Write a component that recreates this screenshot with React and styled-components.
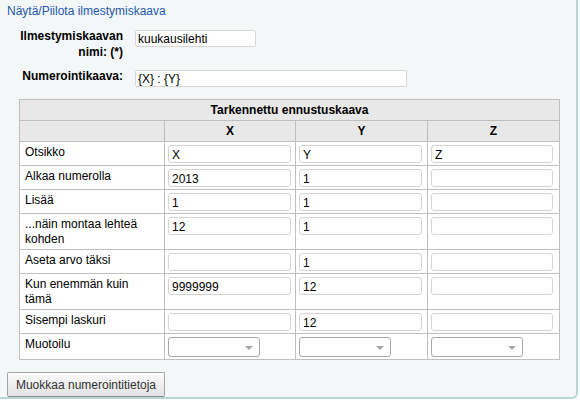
import React from 'react';
import styled, { createGlobalStyle } from 'styled-components';

const GlobalStyle = createGlobalStyle`
  body {
    margin: 0;
    background: #fff;
    font-family: "Liberation Sans", Arial, sans-serif;
    font-size: 12px;
    color: #000;
  }
`;

const rows = [
  { label: 'Otsikko', values: ['X', 'Y', 'Z'] },
  { label: 'Alkaa numerolla', values: ['2013', '1', ''] },
  { label: 'Lisää', values: ['1', '1', ''] },
  { label: '...näin montaa lehteä kohden', values: ['12', '1', ''] },
  { label: 'Aseta arvo täksi', values: ['', '1', ''] },
  { label: 'Kun enemmän kuin tämä', values: ['9999999', '12', ''] },
  { label: 'Sisempi laskuri', values: ['', '12', ''] },
];

const App = () => {
  return (
    <>
      <GlobalStyle />
      <Panel>
        <ToggleLink href="#">Näytä/Piilota ilmestymiskaava</ToggleLink>
        <FieldRow>
          <FieldLabel>Ilmestymiskaavan nimi: (*)</FieldLabel>
          <TextInput width={121} defaultValue="kuukausilehti" />
        </FieldRow>
        <FieldRow>
          <FieldLabel>Numerointikaava:</FieldLabel>
          <TextInput width={272} defaultValue="{X} : {Y}" />
        </FieldRow>
        <PatternTable>
          <colgroup>
            <col style={{ width: 145 }} />
            <col style={{ width: 131 }} />
            <col style={{ width: 132 }} />
            <col style={{ width: 132 }} />
          </colgroup>
          <thead>
            <tr>
              <HeadCell colSpan={4}>Tarkennettu ennustuskaava</HeadCell>
            </tr>
            <tr>
              <HeadCell />
              <HeadCell>X</HeadCell>
              <HeadCell>Y</HeadCell>
              <HeadCell>Z</HeadCell>
            </tr>
          </thead>
          <tbody>
            {rows.map((row) => (
              <tr key={row.label}>
                <LabelCell>{row.label}</LabelCell>
                {row.values.map((v, i) => (
                  <InputCell key={i}>
                    <CellInput defaultValue={v} narrow={i === 2} />
                  </InputCell>
                ))}
              </tr>
            ))}
            <tr>
              <LabelCell>Muotoilu</LabelCell>
              {[0, 1, 2].map((i) => (
                <InputCell key={i}>
                  <SelectWrap>
                    <Select defaultValue="">
                      <option value=""></option>
                    </Select>
                  </SelectWrap>
                </InputCell>
              ))}
            </tr>
          </tbody>
        </PatternTable>
        <EditButton>Muokkaa numerointitietoja</EditButton>
      </Panel>
      <Footer>
        <FooterBox width={73} />
        <FooterBox width={201} />
        <FooterGap width={146} />
        <FooterBox width={87} />
      </Footer>
    </>
  );
};

export default App;

const Panel = styled.div`
  width: 564px;
  padding: 4px 5px 0 7px;
  background: #f3f7f7;
  border-right: 2px solid #b7d7d8;
  border-bottom: 2px solid #b7d7d8;
  border-bottom-right-radius: 6px;
  display: flex;
  flex-direction: column;
  align-items: flex-start;
`;

const ToggleLink = styled.a`
  color: #2658ad;
  text-decoration: none;
  line-height: 14px;
  margin-bottom: 10px;
`;

const FieldRow = styled.div`
  display: grid;
  grid-template-columns: 116px auto;
  column-gap: 12px;
  align-items: start;
  margin-bottom: 8px;
`;

const FieldLabel = styled.label`
  font-weight: bold;
  text-align: right;
  line-height: 16px;
`;

const TextInput = styled.input`
  box-sizing: border-box;
  width: ${(props) => props.width}px;
  height: 17px;
  margin: 2px 0 0;
  padding: 0 2px;
  border: 1px solid #d6d6d6;
  border-radius: 2px;
  background: #fff;
  font-family: inherit;
  font-size: 12px;
  color: #000;
  outline: none;
`;

const PatternTable = styled.table`
  margin: 4px 0 0 12px;
  width: 541px;
  table-layout: fixed;
  border-collapse: collapse;
  background: #fff;
`;

const HeadCell = styled.th`
  background: #e8e8e8;
  border: 1px solid #bfbfbf;
  height: 20px;
  padding: 0;
  font-weight: bold;
  text-align: center;
  line-height: 14px;
`;

const LabelCell = styled.td`
  border: 1px solid #bfbfbf;
  padding: 3px 16px 2px 5px;
  vertical-align: top;
  line-height: 15px;
`;

const InputCell = styled.td`
  border: 1px solid #bfbfbf;
  padding: 3px 3px 2px;
  vertical-align: top;
`;

const CellInput = styled.input`
  display: block;
  box-sizing: border-box;
  width: ${(props) => (props.narrow ? 122 : 123)}px;
  height: 18px;
  margin: 0;
  padding: 1px 3px 0;
  border: 1px solid #d4d4d4;
  border-radius: 3px;
  background: #fff;
  font-family: inherit;
  font-size: 12px;
  color: #000;
  outline: none;
`;

const SelectWrap = styled.div`
  position: relative;
  width: 92px;

  &::after {
    content: '';
    position: absolute;
    right: 7px;
    top: 9px;
    border-left: 4px solid transparent;
    border-right: 4px solid transparent;
    border-top: 4px solid #a6a6a6;
    pointer-events: none;
  }
`;

const Select = styled.select`
  display: block;
  box-sizing: border-box;
  width: 92px;
  height: 20px;
  margin: 0;
  border: 1px solid #a9a9a9;
  border-radius: 3px;
  background: #fff;
  appearance: none;
  outline: none;
`;

const EditButton = styled.button`
  margin-top: 12px;
  height: 25px;
  width: 158px;
  padding: 0;
  border: 1px solid #a3a3a3;
  border-bottom-color: #8a8a8a;
  border-radius: 2px;
  background: linear-gradient(#fbfbfb, #e2e2e2);
  font-family: "Liberation Sans", Arial, sans-serif;
  font-size: 12px;
  color: #333;
`;

const Footer = styled.div`
  display: flex;
  margin-top: 6px;
  height: 4px;
  overflow: hidden;
`;

const FooterBox = styled.div`
  width: ${(props) => props.width}px;
  height: 6px;
  border-top: 1px solid #c8c8c8;
  border-right: 1px solid #555;
  box-sizing: border-box;
`;

const FooterGap = styled.div`
  width: ${(props) => props.width}px;
`;
